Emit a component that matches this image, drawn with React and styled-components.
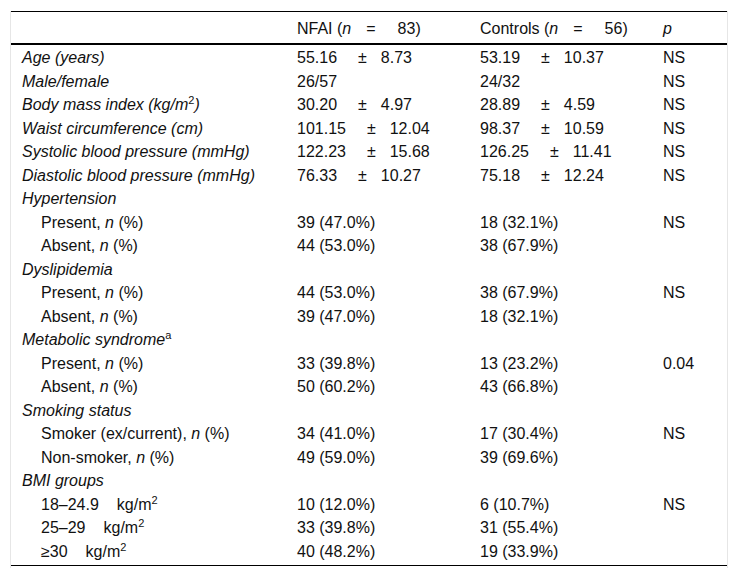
import React from 'react';
import styled, { createGlobalStyle } from 'styled-components';

const GlobalStyle = createGlobalStyle`
  body {
    margin: 0;
    background: #fff;
    font-family: 'Liberation Sans', Arial, sans-serif;
    color: #111;
  }
`;

const Frame = styled.div`
  margin: 11px 0 0 10px;
  width: 716px;
  border-left: 1px solid #e6e6e6;
  border-right: 1px solid #e6e6e6;
  padding-bottom: 2px;
`;

const Table = styled.table`
  width: 716px;
  border-collapse: collapse;
  table-layout: fixed;
  font-size: 16px;
  border-top: 1px solid #000;
  border-bottom: 1px solid #000;
`;

const HeadCell = styled.th`
  text-align: left;
  font-weight: normal;
  padding: 3px 0 0 11px;
  line-height: 28px;
  height: 28px;
  border-bottom: 2px solid #000;
  white-space: nowrap;
`;

const Cell = styled.td`
  padding: 0 0 0 ${(p) => (p.$indent ? 30 : 11)}px;
  line-height: 23.5px;
  white-space: nowrap;
  font-style: ${(p) => (p.$italic ? 'italic' : 'normal')};
  vertical-align: top;
`;

const Row = styled.tr`
  &:first-child td {
    padding-top: 1px;
  }
  &:last-child td {
    padding-bottom: 2px;
  }
`;

const Eq = styled.span`
  margin: 0 22px 0 15px;
`;

const Pm = styled.span`
  margin: 0 14px 0 21px;
`;

const Unit = styled.span`
  margin-left: 18px;
`;

const Sup = styled.sup`
  font-size: 11px;
  line-height: 0;
  vertical-align: 6px;
  font-style: normal;
`;

const MeanSd = ({ m, sd }) => (
  <>
    {m}
    <Pm>±</Pm>
    {sd}
  </>
);

const Npct = () => (
  <>
    , <i>n</i> (%)
  </>
);

const Kg = () => (
  <Unit>
    kg/m<Sup>2</Sup>
  </Unit>
);

const rows = [
  { label: 'Age (years)', italic: true, a: <MeanSd m="55.16" sd="8.73" />, b: <MeanSd m="53.19" sd="10.37" />, p: 'NS' },
  { label: 'Male/female', italic: true, a: '26/57', b: '24/32', p: 'NS' },
  { label: <>Body mass index (kg/m<Sup>2</Sup>)</>, italic: true, a: <MeanSd m="30.20" sd="4.97" />, b: <MeanSd m="28.89" sd="4.59" />, p: 'NS' },
  { label: 'Waist circumference (cm)', italic: true, a: <MeanSd m="101.15" sd="12.04" />, b: <MeanSd m="98.37" sd="10.59" />, p: 'NS' },
  { label: 'Systolic blood pressure (mmHg)', italic: true, a: <MeanSd m="122.23" sd="15.68" />, b: <MeanSd m="126.25" sd="11.41" />, p: 'NS' },
  { label: 'Diastolic blood pressure (mmHg)', italic: true, a: <MeanSd m="76.33" sd="10.27" />, b: <MeanSd m="75.18" sd="12.24" />, p: 'NS' },
  { label: 'Hypertension', italic: true },
  { label: <>Present<Npct /></>, indent: true, a: '39 (47.0%)', b: '18 (32.1%)', p: 'NS' },
  { label: <>Absent<Npct /></>, indent: true, a: '44 (53.0%)', b: '38 (67.9%)' },
  { label: 'Dyslipidemia', italic: true },
  { label: <>Present<Npct /></>, indent: true, a: '44 (53.0%)', b: '38 (67.9%)', p: 'NS' },
  { label: <>Absent<Npct /></>, indent: true, a: '39 (47.0%)', b: '18 (32.1%)' },
  { label: <>Metabolic syndrome<Sup>a</Sup></>, italic: true },
  { label: <>Present<Npct /></>, indent: true, a: '33 (39.8%)', b: '13 (23.2%)', p: '0.04' },
  { label: <>Absent<Npct /></>, indent: true, a: '50 (60.2%)', b: '43 (66.8%)' },
  { label: 'Smoking status', italic: true },
  { label: <>Smoker (ex/current)<Npct /></>, indent: true, a: '34 (41.0%)', b: '17 (30.4%)', p: 'NS' },
  { label: <>Non-smoker<Npct /></>, indent: true, a: '49 (59.0%)', b: '39 (69.6%)' },
  { label: 'BMI groups', italic: true },
  { label: <>18–24.9<Kg /></>, indent: true, a: '10 (12.0%)', b: '6 (10.7%)', p: 'NS' },
  { label: <>25–29<Kg /></>, indent: true, a: '33 (39.8%)', b: '31 (55.4%)' },
  { label: <>≥30<Kg /></>, indent: true, a: '40 (48.2%)', b: '19 (33.9%)' },
];

export default function App() {
  return (
    <>
      <GlobalStyle />
      <Frame>
        <Table>
          <colgroup>
            <col style={{ width: 275 }} />
            <col style={{ width: 183 }} />
            <col style={{ width: 183 }} />
            <col style={{ width: 75 }} />
          </colgroup>
          <thead>
            <tr>
              <HeadCell />
              <HeadCell>
                NFAI (<i>n</i>
                <Eq>=</Eq>83)
              </HeadCell>
              <HeadCell>
                Controls (<i>n</i>
                <Eq>=</Eq>56)
              </HeadCell>
              <HeadCell>
                <i>p</i>
              </HeadCell>
            </tr>
          </thead>
          <tbody>
            {rows.map((r, i) => (
              <Row key={i}>
                <Cell $italic={r.italic} $indent={r.indent}>{r.label}</Cell>
                <Cell>{r.a}</Cell>
                <Cell>{r.b}</Cell>
                <Cell>{r.p}</Cell>
              </Row>
            ))}
          </tbody>
        </Table>
      </Frame>
    </>
  );
}
